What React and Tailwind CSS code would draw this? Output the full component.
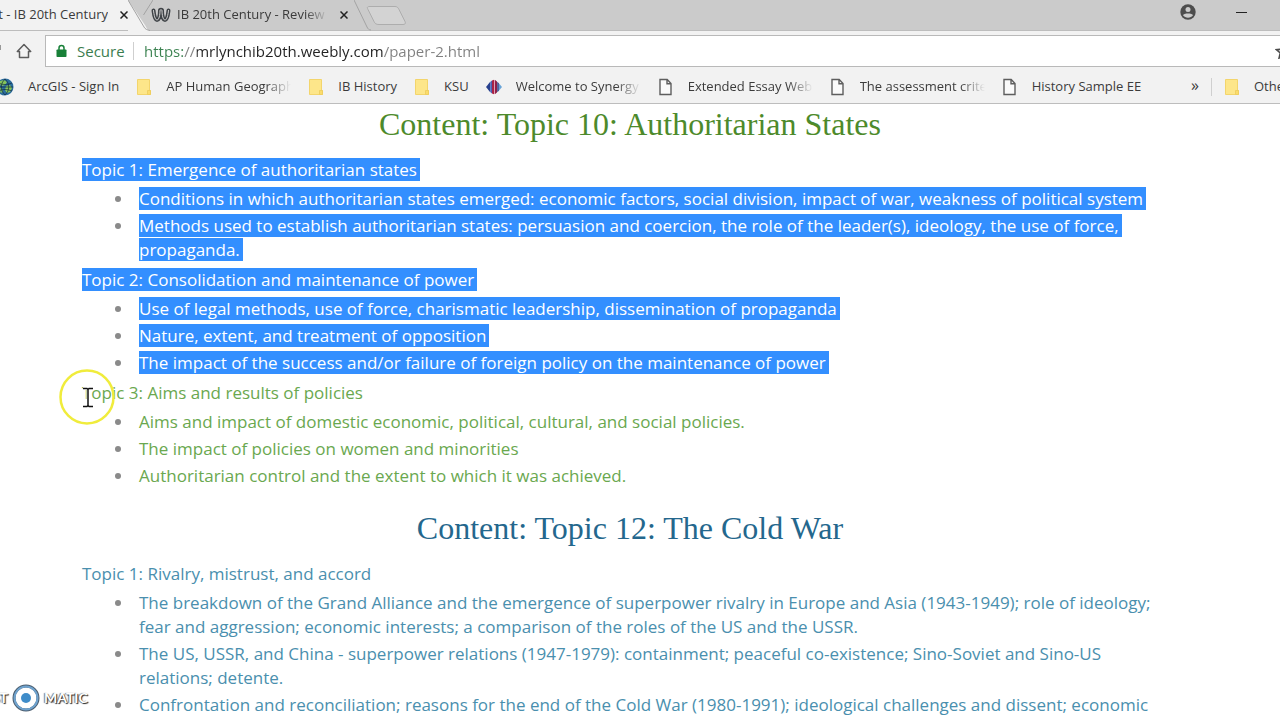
import React from "react";

const bookmarks = [
  { label: "ArcGIS - Sign In", icon: "globe" },
  { label: "AP Human Geograph", icon: "folder", faded: true },
  { label: "IB History", icon: "folder" },
  { label: "KSU", icon: "folder" },
  { label: "Welcome to Synergy", icon: "synergy", faded: true },
  { label: "Extended Essay Web", icon: "page", faded: true },
  { label: "The assessment crite", icon: "page", faded: true },
  { label: "History Sample EE", icon: "page" },
];

const sections = [
  {
    title: "Content: Topic 10: Authoritarian States",
    titleColor: "text-[#4d8a2b]",
    textColor: "text-[#6aa84f]",
    topics: [
      {
        name: "Topic 1: Emergence of authoritarian states",
        selected: true,
        points: [
          "Conditions in which authoritarian states emerged: economic factors, social division, impact of war, weakness of political system",
          "Methods used to establish authoritarian states: persuasion and coercion, the role of the leader(s), ideology, the use of force, propaganda.",
        ],
      },
      {
        name: "Topic 2: Consolidation and maintenance of power",
        selected: true,
        points: [
          "Use of legal methods, use of force, charismatic leadership, dissemination of propaganda",
          "Nature, extent, and treatment of opposition",
          "The impact of the success and/or failure of foreign policy on the maintenance of power",
        ],
      },
      {
        name: "Topic 3: Aims and results of policies",
        points: [
          "Aims and impact of domestic economic, political, cultural, and social policies.",
          "The impact of policies on women and minorities",
          "Authoritarian control and the extent to which it was achieved.",
        ],
      },
    ],
  },
  {
    title: "Content: Topic 12: The Cold War",
    titleColor: "text-[#24678d]",
    textColor: "text-[#4a8fae]",
    topics: [
      {
        name: "Topic 1: Rivalry, mistrust, and accord",
        points: [
          "The breakdown of the Grand Alliance and the emergence of superpower rivalry in Europe and Asia (1943-1949); role of ideology; fear and aggression; economic interests; a comparison of the roles of the US and the USSR.",
          "The US, USSR, and China - superpower relations (1947-1979): containment; peaceful co-existence; Sino-Soviet and Sino-US relations; detente.",
          "Confrontation and reconciliation; reasons for the end of the Cold War (1980-1991); ideological challenges and dissent; economic",
        ],
      },
    ],
  },
];

function BookmarkIcon({ kind }) {
  if (kind === "folder") {
    return (
      <svg viewBox="0 0 16 18" className="h-[18px] w-4 shrink-0" aria-hidden="true">
        <path d="M1.5 1.5h12v11h1v4h-13z" fill="#fde68a" stroke="#f3d56c" />
        <path d="M11.5 16.5v-4h3v4z" fill="#fbdc6c" stroke="#eccb5c" strokeWidth=".8" />
      </svg>
    );
  }
  if (kind === "page") {
    return (
      <svg viewBox="0 0 16 18" className="h-[18px] w-4 shrink-0" aria-hidden="true">
        <path d="M2 1.5h7.2L13 5.5v11H2z M9 1.5v4.2h4" fill="#fafafa" stroke="#5e5e5e" strokeWidth="1.4" />
      </svg>
    );
  }
  if (kind === "synergy") {
    return (
      <svg viewBox="0 0 16 16" className="size-4 shrink-0" aria-hidden="true">
        <path d="M0 8L4 3v10z" fill="#27408e" />
        <path d="M4.2 3L6 1.5v13L4.2 13z" fill="#4a62b4" />
        <path d="M6 1.5L8 .8v14.4l-2-.7z" fill="#a92345" />
        <path d="M8 .8l2 .7v13l-2 .7z" fill="#e2a3b4" />
        <path d="M9 1l2 1.5v11L9 15z" fill="#8f2049" />
        <path d="M11.3 2.7l1.5 1.5v7.6l-1.5 1.5z" fill="#1f2e78" />
        <path d="M12.8 4.2L16 8l-3.2 3.8z" fill="#67a4d8" />
      </svg>
    );
  }
  return (
    <svg viewBox="0 0 18 18" className="-ml-0.5 size-[18px] shrink-0" aria-hidden="true">
      <circle cx="9" cy="9" r="8.5" fill="#2b6c9c" />
      <path d="M4 3l4-1 3 2-2 3-3 1-3-2zM10 8l4-1 2 3-2 4-3 1-2-3z" fill="#85c45a" />
      <path d="M3 9l3 1 1 4-2 1-2-3z" fill="#74b365" />
      <path d="M1 9h16M9 1c-5 5-5 11 0 16M9 1c5 5 5 11 0 16M2 5c5 2 9 2 14 0M2 13c5-2 9-2 14 0" fill="none" stroke="#10283f" strokeWidth=".7" />
    </svg>
  );
}

function TabStrip() {
  return (
    <div className="flex h-[31px] items-stretch border-b border-[#bdbdbd] bg-[#cbcbcb] text-[13px] text-[#3b3b3b]">
      <div className="flex items-center bg-[#f2f2f2]">
        <a href="#paper-2" className="flex w-[108px] justify-end overflow-hidden whitespace-nowrap">
          Content - IB 20th Century
        </a>
        <CloseButton label="Close Content tab" />
      </div>
      <svg viewBox="0 0 25 31" className="-mr-0.5 -mb-px h-[31px] w-[25px] shrink-0" aria-hidden="true">
        <path d="M0 0L17 25c2 4 3 5 5 6H0z" fill="#f2f2f2" />
        <path d="M0 0L16 27c1 2 3 3 6 3.500M25 0L15.500 15" fill="none" stroke="#a3a3a3" />
      </svg>
      <div className="flex items-center">
        <svg viewBox="0 0 20 16" className="h-4 w-5 shrink-0" aria-hidden="true">
          <path d="M2.5 3.5C3 8 4 13 6 13s3-5 3-9.500c0-1 2-1 2 0C11 8 12 13 14 13s3-5 3.500-9.500" fill="none" stroke="#3f4347" strokeWidth="4" strokeLinecap="round" strokeLinejoin="round" />
          <path d="M2.500 3.500C3 8 4 13 6 13s3-5 3-9.500c0-1 2-1 2 0C11 8 12 13 14 13s3-5 3.500-9.500" fill="none" stroke="#d4d4d4" strokeWidth="1" strokeLinecap="round" />
        </svg>
        <a
          href="#review"
          className="ml-1.5 w-[151px] overflow-hidden whitespace-nowrap [mask-image:linear-gradient(to_right,black_85%,transparent)]"
        >
          IB 20th Century - Review
        </a>
        <CloseButton label="Close Review tab" />
      </div>
      <button type="button" aria-label="New tab" className="ml-1.5 shrink-0">
        <svg viewBox="0 0 60 31" className="h-[31px] w-[60px]">
          <path d="M0 0l13 27c1 2 2 3 4 3" fill="none" stroke="#a3a3a3" />
          <path d="M16 6.500h25c2 0 3 1 4 3l6 12c1 2 0 3-2 3H25c-3 0-4-1-5-3l-6-12c-1-2-1-3 2-3z" fill="#d3d3d3" stroke="#adadad" />
        </svg>
      </button>
      <div className="ml-auto flex items-start">
        <button type="button" aria-label="Profile" className="mt-1 mr-10">
          <svg viewBox="0 0 16 16" className="size-4">
            <circle cx="8" cy="8" r="7.700" fill="#4d4d4d" />
            <circle cx="8" cy="5.400" r="2.500" fill="#cbcbcb" />
            <path d="M3 11.300c.5-2.300 9.500-2.300 10 0-2 3.300-8 3.300-10 0z" fill="#cbcbcb" />
          </svg>
        </button>
        <button type="button" aria-label="Minimize" className="mt-1 mr-8">
          <svg viewBox="0 0 12 16" className="h-4 w-3">
            <path d="M0 8.500h11" stroke="#222" />
          </svg>
        </button>
      </div>
    </div>
  );
}

function CloseButton({ label }) {
  return (
    <button type="button" aria-label={label} className="ml-3 shrink-0">
      <svg viewBox="0 0 8 8" className="size-2">
        <path d="M.5.5l7 7M7.500.5l-7 7" stroke="#222" strokeWidth="1.500" />
      </svg>
    </button>
  );
}

function AddressBar() {
  return (
    <div className="flex h-9 items-end bg-[#f2f2f2]">
      <div className="flex h-8 w-[45px] shrink-0 items-center">
        <button type="button" aria-label="Reload" className="w-4">
          <svg viewBox="0 0 16 18" className="h-[18px] w-4">
            <path d="M0 3v5" stroke="#999" strokeWidth="2" />
          </svg>
        </button>
        <button type="button" aria-label="Home">
          <svg viewBox="0 0 16 16" className="size-4">
            <path d="M8 1.500L1.300 8.400h2.200v6.100h9V8.400h2.200z" fill="none" stroke="#5c5c5c" strokeWidth="1.500" strokeLinejoin="round" />
          </svg>
        </button>
      </div>
      <div className="flex h-8 grow items-center overflow-hidden border-y border-l border-[#b9b9b9] bg-white pl-2.5 text-base">
        <svg viewBox="0 0 11 14" className="h-3.5 w-[11px] shrink-0" aria-hidden="true">
          <path d="M3 6V4a2.500 2.500 0 015 0v2" fill="none" stroke="#188038" strokeWidth="1.500" />
          <rect x=".5" y="5.500" width="10" height="7.500" rx=".8" fill="#188038" />
        </svg>
        <label htmlFor="url" className="ml-2.5 w-12 text-[15px] text-[#3b7d4f]">
          Secure
        </label>
        <span className="ml-2 h-[18px] w-px bg-[#cfcfcf]" />
        <input
          id="url"
          type="text"
          defaultValue="https://mrlynchib20th.weebly.com/paper-2.html"
          className="ml-2.5 h-7 min-w-0 grow bg-[linear-gradient(to_right,#3b8250_40px,#808080_40px,#808080_53px,#222_53px,#222_240px,#808080_240px)] bg-clip-text text-[15px] text-transparent outline-none"
        />
        <button type="button" aria-label="Bookmark this page" className="-mr-3 shrink-0">
          <svg viewBox="0 0 17 16" className="h-4 w-[17px]">
            <path d="M8.500 1.500l2 4.800 5 .4-3.800 3.300 1.200 5-4.400-2.700L4.100 15l1.200-5L1.500 6.700l5-.4z" fill="none" stroke="#4a4a4a" strokeWidth="1.600" />
          </svg>
        </button>
      </div>
    </div>
  );
}

function BookmarksBar() {
  return (
    <nav className="flex h-[37px] items-center overflow-hidden border-b border-[#bdbdbd] bg-[#f2f2f2] pt-1 text-[13px] whitespace-nowrap text-[#3b3b3b]">
      <div className="-ml-0.5 flex items-center gap-[17px]">
        {bookmarks.map((b) => (
          <a key={b.label} href="#bookmark" className="flex items-center gap-3.5">
            <BookmarkIcon kind={b.icon} />
            <span
              className={
                b.faded
                  ? "w-[125px] overflow-hidden [mask-image:linear-gradient(to_right,black_80%,transparent)]"
                  : ""
              }
            >
              {b.label}
            </span>
          </a>
        ))}
      </div>
      <button type="button" aria-label="More bookmarks" className="ml-auto shrink-0 pb-1 text-base leading-none">
        »
      </button>
      <span className="ml-3 h-[18px] w-px shrink-0 bg-[#cfcfcf]" />
      <a href="#other" className="ml-3 flex w-14 shrink-0 items-center gap-3.5 overflow-hidden">
        <BookmarkIcon kind="folder" />
        Other bookmarks
      </a>
    </nav>
  );
}

function Topic({ topic }) {
  const mark = topic.selected ? "bg-[#338fff] box-decoration-clone pr-[3px] text-white" : "";
  return (
    <section>
      <h3>
        <span className={mark}>{topic.name}</span>
      </h3>
      <ul className="mt-[5px] mb-1.5 flex flex-col gap-[3px] pr-2 pl-[33px]">
        {topic.points.map((p) => (
          <li
            key={p}
            className="flex before:mt-[9px] before:mr-[18px] before:size-1.5 before:shrink-0 before:rounded-full before:bg-[#8a8a8a] before:content-['']"
          >
            <p>
              <span className={mark}>{p}</span>
            </p>
          </li>
        ))}
      </ul>
    </section>
  );
}

function Watermark() {
  return (
    <div className="absolute bottom-2 left-0 flex items-center gap-1 font-['Lato',sans-serif] text-sm leading-none font-bold text-white [text-shadow:1px_1px_1px_#222,-1px_0_1px_#777]">
      <span className="flex w-2 justify-end">ST</span>
      <svg viewBox="0 0 28 28" className="size-7" aria-hidden="true">
        <circle cx="14" cy="14" r="12" fill="#fff" stroke="#4d5f70" strokeWidth="3" />
        <circle cx="14" cy="14" r="11.500" fill="none" stroke="#6fa3cf" strokeWidth="2" />
        <circle cx="14" cy="14" r="5" fill="#3f8cc9" />
      </svg>
      <span>MATIC</span>
    </div>
  );
}

function Pointer() {
  return (
    <svg viewBox="0 0 56 56" className="pointer-events-none absolute top-[369px] left-[59px] size-14" aria-hidden="true">
      <circle cx="28" cy="28" r="26.500" fill="none" stroke="#f0ec3c" strokeWidth="2.500" />
      <path d="M24 19.500h4l1 1 1-1h4M29 20v17M24 37.500h4l1-1 1 1h4" fill="none" stroke="#fff" strokeWidth="3" />
      <path d="M24 19.500h4l1 1 1-1h4M29 20v17M24 37.500h4l1-1 1 1h4" fill="none" stroke="#111" strokeWidth="1.500" />
    </svg>
  );
}

export default function App() {
  return (
    <div className="relative h-screen overflow-hidden bg-white font-['Open_Sans','Noto_Sans',sans-serif]">
      <header>
        <TabStrip />
        <AddressBar />
        <BookmarksBar />
      </header>
      <main className="pr-[102px] pl-[82px] text-[17px] leading-6">
        {sections.map((s) => (
          <article key={s.title} className={s.textColor}>
            <h2
              className={`pb-3.5 text-center font-['Liberation_Serif',serif] text-[32px] leading-10 ${s.titleColor}`}
            >
              {s.title}
            </h2>
            {s.topics.map((t) => (
              <Topic key={t.name} topic={t} />
            ))}
            <div className="h-3.5" />
          </article>
        ))}
      </main>
      <Watermark />
      <Pointer />
    </div>
  );
}
